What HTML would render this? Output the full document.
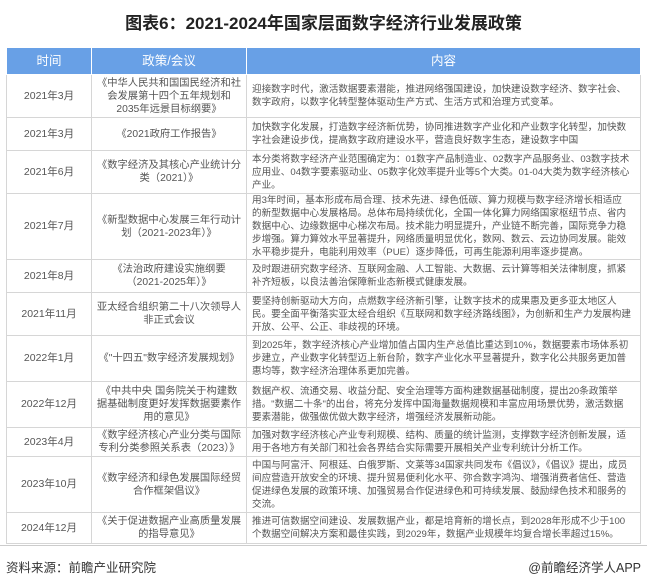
<!DOCTYPE html>
<html><head><meta charset="utf-8"><style>
body{margin:0;width:647px;height:585px;background:#fff;font-family:"Liberation Sans","Noto Sans CJK SC",sans-serif;position:relative;overflow:hidden}
h1{position:absolute;top:9px;left:0;width:647px;text-align:center;font-size:17px;font-weight:bold;color:#222;margin:0}
table{position:absolute;left:6px;top:47px;width:635px;border-collapse:collapse;table-layout:fixed;color:#555}
td,th{border:1px solid #d6d6d6;padding:0 4px;line-height:13px;vertical-align:middle;overflow:hidden}
th{background:#68a0e6;color:#fff;font-weight:normal;font-size:12.5px;height:26px;border-color:#fff}
td.t{text-align:center;font-size:10.5px}
td.p{text-align:center;font-size:10.3px}
td.x{font-size:9.6px;padding:0 9px 0 5px}
.src{position:absolute;top:557px;left:6px;font-size:12.5px;color:#333}
.app{position:absolute;top:557px;right:6px;font-size:12.5px;color:#333}
.line{position:absolute;top:545px;left:0;width:647px;height:1px;background:#ccc}
</style></head><body>
<h1>图表6：2021-2024年国家层面数字经济行业发展政策</h1>
<table>
<colgroup><col style="width:85px"><col style="width:155px"><col></colgroup>
<tr><th>时间</th><th>政策/会议</th><th>内容</th></tr>
<tr style="height:43px"><td class="t">2021年3月</td><td class="p">《中华人民共和国国民经济和社会发展第十四个五年规划和2035年远景目标纲要》</td><td class="x">迎接数字时代，激活数据要素潜能，推进网络强国建设，加快建设数字经济、数字社会、数字政府，以数字化转型整体驱动生产方式、生活方式和治理方式变革。</td></tr>
<tr style="height:33px"><td class="t">2021年3月</td><td class="p">《2021政府工作报告》</td><td class="x">加快数字化发展，打造数字经济新优势，协同推进数字产业化和产业数字化转型，加快数字社会建设步伐，提高数字政府建设水平，营造良好数字生态，建设数字中国</td></tr>
<tr style="height:43px"><td class="t">2021年6月</td><td class="p">《数字经济及其核心产业统计分类（2021）》</td><td class="x">本分类将数字经济产业范围确定为：01数字产品制造业、02数字产品服务业、03数字技术应用业、04数字要素驱动业、05数字化效率提升业等5个大类。01-04大类为数字经济核心产业。</td></tr>
<tr style="height:65px"><td class="t">2021年7月</td><td class="p">《新型数据中心发展三年行动计划（2021-2023年）》</td><td class="x">用3年时间，基本形成布局合理、技术先进、绿色低碳、算力规模与数字经济增长相适应的新型数据中心发展格局。总体布局持续优化，全国一体化算力网络国家枢纽节点、省内数据中心、边缘数据中心梯次布局。技术能力明显提升，产业链不断完善，国际竞争力稳步增强。算力算效水平显著提升，网络质量明显优化，数网、数云、云边协同发展。能效水平稳步提升，电能利用效率（PUE）逐步降低，可再生能源利用率逐步提高。</td></tr>
<tr style="height:33px"><td class="t">2021年8月</td><td class="p">《法治政府建设实施纲要（2021-2025年）》</td><td class="x">及时跟进研究数字经济、互联网金融、人工智能、大数据、云计算等相关法律制度，抓紧补齐短板，以良法善治保障新业态新模式健康发展。</td></tr>
<tr style="height:43px"><td class="t">2021年11月</td><td class="p">亚太经合组织第二十八次领导人非正式会议</td><td class="x">要坚持创新驱动大方向，点燃数字经济新引擎，让数字技术的成果惠及更多亚太地区人民。要全面平衡落实亚太经合组织《互联网和数字经济路线图》，为创新和生产力发展构建开放、公平、公正、非歧视的环境。</td></tr>
<tr style="height:46px"><td class="t">2022年1月</td><td class="p">《"十四五"数字经济发展规划》</td><td class="x">到2025年，数字经济核心产业增加值占国内生产总值比重达到10%，数据要素市场体系初步建立，产业数字化转型迈上新台阶，数字产业化水平显著提升，数字化公共服务更加普惠均等，数字经济治理体系更加完善。</td></tr>
<tr style="height:46px"><td class="t">2022年12月</td><td class="p">《中共中央 国务院关于构建数据基础制度更好发挥数据要素作用的意见》</td><td class="x">数据产权、流通交易、收益分配、安全治理等方面构建数据基础制度，提出20条政策举措。"数据二十条"的出台，将充分发挥中国海量数据规模和丰富应用场景优势，激活数据要素潜能，做强做优做大数字经济，增强经济发展新动能。</td></tr>
<tr style="height:29px"><td class="t">2023年4月</td><td class="p">《数字经济核心产业分类与国际专利分类参照关系表（2023）》</td><td class="x">加强对数字经济核心产业专利规模、结构、质量的统计监测，支撑数字经济创新发展，适用于各地方有关部门和社会各界结合实际需要开展相关产业专利统计分析工作。</td></tr>
<tr style="height:56px"><td class="t">2023年10月</td><td class="p">《数字经济和绿色发展国际经贸合作框架倡议》</td><td class="x">中国与阿富汗、阿根廷、白俄罗斯、文莱等34国家共同发布《倡议》，《倡议》提出，成员间应营造开放安全的环境、提升贸易便利化水平、弥合数字鸿沟、增强消费者信任、营造促进绿色发展的政策环境、加强贸易合作促进绿色和可持续发展、鼓励绿色技术和服务的交流。</td></tr>
<tr style="height:31px"><td class="t">2024年12月</td><td class="p">《关于促进数据产业高质量发展的指导意见》</td><td class="x">推进可信数据空间建设、发展数据产业，都是培育新的增长点，到2028年形成不少于100个数据空间解决方案和最佳实践，到2029年，数据产业规模年均复合增长率超过15%。</td></tr>
</table>
<div class="line"></div>
<div class="src">资料来源：前瞻产业研究院</div>
<div class="app">@前瞻经济学人APP</div>
</body></html>
